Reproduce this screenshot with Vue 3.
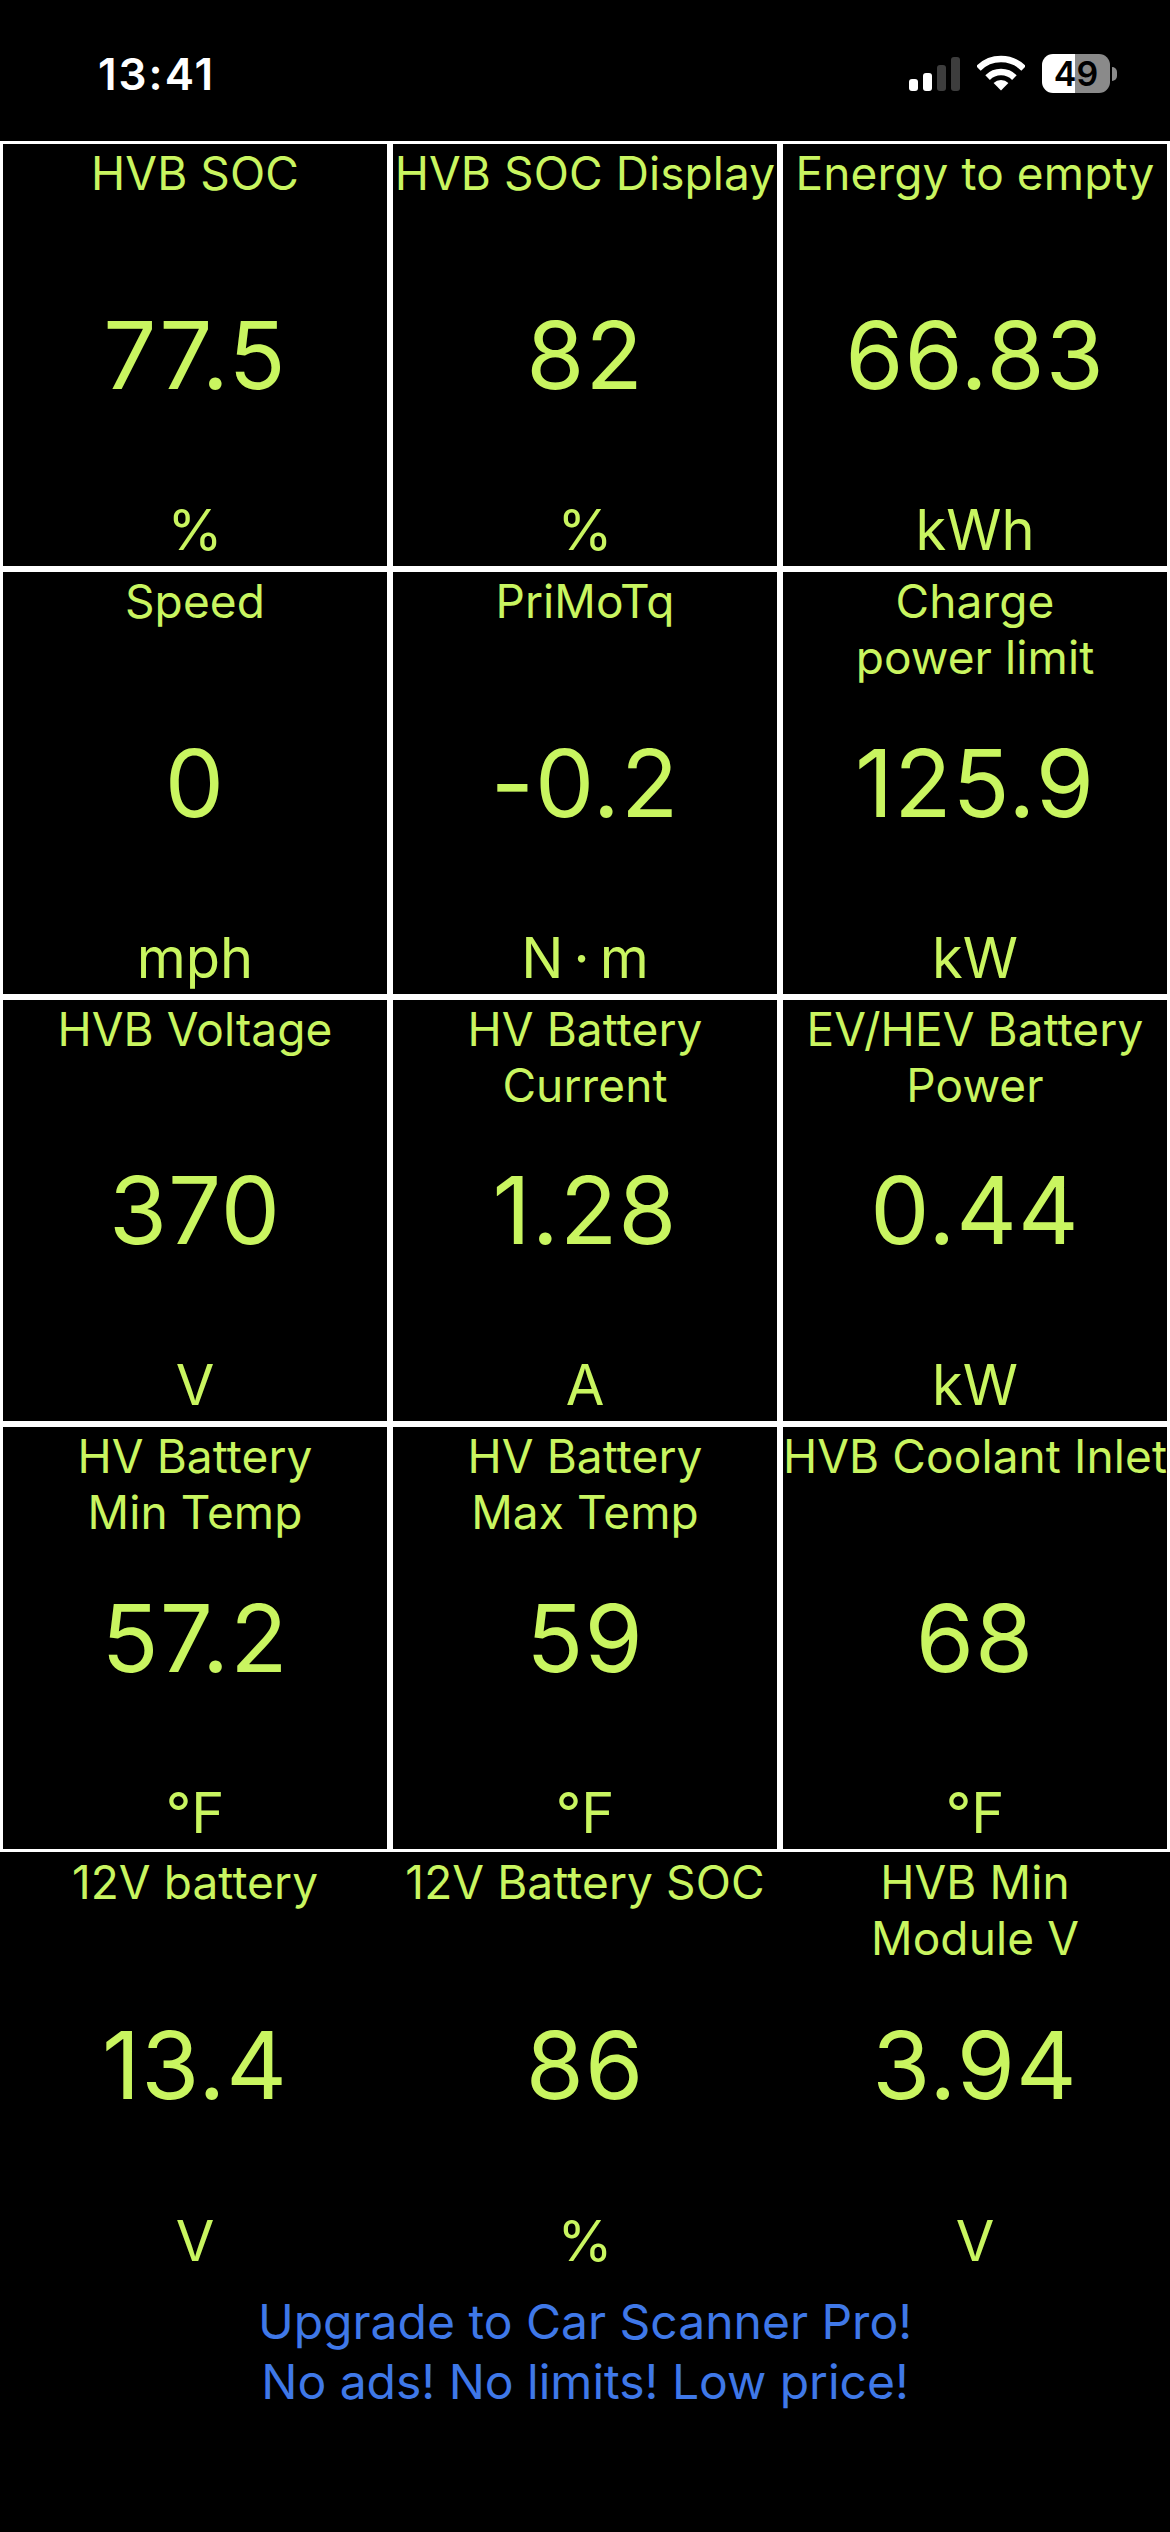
<template>
  <div class="screen">
    <!-- Barra de status -->
    <header class="status-bar">
      <span class="hora">13:41</span>
      <div class="status-icones">
        <div class="sinal">
          <span v-for="(b, i) in barras" :key="i" class="barra" :class="{ apagada: i > 1 }" :style="{ height: b + 'px' }"></span>
        </div>
        <svg class="wifi" width="48" height="36" viewBox="0 0 48 36">
          <path d="M1.4 13.4A32 32 0 0 1 46.6 13.4" fill="none" stroke="#fff" stroke-width="6.5" />
          <path d="M10.6 22.6A19 19 0 0 1 37.4 22.6" fill="none" stroke="#fff" stroke-width="6.5" />
          <path d="M24 35.5L16.6 28.1A10.5 10.5 0 0 1 31.4 28.1Z" fill="#fff" />
        </svg>
        <div class="bateria">
          <div class="bateria-corpo"><span>49</span></div>
          <div class="bateria-polo"></div>
        </div>
      </div>
    </header>

    <!-- Grade de sensores -->
    <main class="grade">
      <div v-for="s in sensores" :key="s.titulo.join()" class="celula">
        <div class="titulo">
          <span v-for="l in s.titulo" :key="l">{{ l }}</span>
        </div>
        <div class="valor">{{ s.valor }}</div>
        <div class="unidade">{{ s.unidade }}</div>
      </div>
    </main>

    <div class="grade grade-livre">
      <div v-for="s in livres" :key="s.titulo.join()" class="celula">
        <div class="titulo">
          <span v-for="l in s.titulo" :key="l">{{ l }}</span>
        </div>
        <div class="valor">{{ s.valor }}</div>
        <div class="unidade">{{ s.unidade }}</div>
      </div>
    </div>

    <footer class="upgrade">
      <span>Upgrade to Car Scanner Pro!</span>
      <span>No ads! No limits! Low price!</span>
    </footer>
  </div>
</template>

<script setup>
const barras = [12, 18, 26, 34];

const sensores = [
  { titulo: ["HVB SOC"], valor: "77.5", unidade: "%" },
  { titulo: ["HVB SOC Display"], valor: "82", unidade: "%" },
  { titulo: ["Energy to empty"], valor: "66.83", unidade: "kWh" },
  { titulo: ["Speed"], valor: "0", unidade: "mph" },
  { titulo: ["PriMoTq"], valor: "-0.2", unidade: "N\u2009·\u2009m" },
  { titulo: ["Charge", "power limit"], valor: "125.9", unidade: "kW" },
  { titulo: ["HVB Voltage"], valor: "370", unidade: "V" },
  { titulo: ["HV Battery", "Current"], valor: "1.28", unidade: "A" },
  { titulo: ["EV/HEV Battery", "Power"], valor: "0.44", unidade: "kW" },
  { titulo: ["HV Battery", "Min Temp"], valor: "57.2", unidade: "°F" },
  { titulo: ["HV Battery", "Max Temp"], valor: "59", unidade: "°F" },
  { titulo: ["HVB Coolant Inlet"], valor: "68", unidade: "°F" },
];

const livres = [
  { titulo: ["12V battery"], valor: "13.4", unidade: "V" },
  { titulo: ["12V Battery SOC"], valor: "86", unidade: "%" },
  { titulo: ["HVB Min", "Module V"], valor: "3.94", unidade: "V" },
];
</script>

<style scoped>
.screen {
  width: 1170px;
  height: 2532px;
  background: #000;
  overflow: hidden;
  font-family: Inter, "Liberation Sans", sans-serif;
  color: #c9f560;
}

.status-bar {
  height: 141px;
  box-sizing: border-box;
  padding: 48px 53px 0 98px;
  display: flex;
  justify-content: space-between;
  align-items: flex-start;
}

.hora {
  color: #fff;
  font-size: 44px;
  font-weight: 600;
  line-height: 52px;
  letter-spacing: 2px;
}

.status-icones {
  display: flex;
  align-items: flex-end;
  padding-top: 6px;
}

.sinal {
  display: flex;
  align-items: flex-end;
  gap: 5px;
  height: 34px;
  margin: 3px 17px 2px 0;
}

.barra {
  width: 9px;
  background: #fff;
  border-radius: 3px;
}

.barra.apagada {
  background: #3d3d3d;
}

.wifi {
  margin-bottom: 2px;
}

.bateria {
  display: flex;
  align-items: center;
  margin-left: 17px;
}

.bateria-corpo {
  width: 68px;
  height: 39px;
  border-radius: 11px;
  background: linear-gradient(to right, #fff 48%, #8a8a8a 48%);
  display: flex;
  align-items: center;
  justify-content: center;
  color: #000;
  font-size: 34px;
  font-weight: 600;
}

.bateria-polo {
  width: 5px;
  height: 14px;
  margin-left: 2px;
  border-radius: 0 7px 7px 0;
  background: #8a8a8a;
}

.grade {
  display: grid;
  grid-template-columns: repeat(3, 390px);
  grid-auto-rows: 427.75px;
}

.celula {
  box-sizing: border-box;
  border: 3px solid #fff;
  display: grid;
  grid-template-rows: 112px 1fr 112px;
  justify-items: center;
  min-width: 0;
}

.titulo {
  display: flex;
  flex-direction: column;
  align-items: center;
  font-size: 46px;
  line-height: 56px;
  white-space: nowrap;
  letter-spacing: 0.1px;
  padding-top: 1px;
}

.valor {
  align-self: center;
  font-size: 94px;
  line-height: 108px;
  letter-spacing: 1px;
}

.unidade {
  align-self: end;
  font-size: 56px;
  line-height: 66px;
  margin-bottom: 3px;
}

.grade-livre {
  grid-auto-rows: 430px;
  margin-top: -2px;
}

.grade-livre .celula {
  border-color: transparent;
}

.upgrade {
  display: flex;
  flex-direction: column;
  align-items: center;
  color: #3f78e8;
  font-size: 48px;
  line-height: 60px;
  padding-top: 12px;
}
</style>
